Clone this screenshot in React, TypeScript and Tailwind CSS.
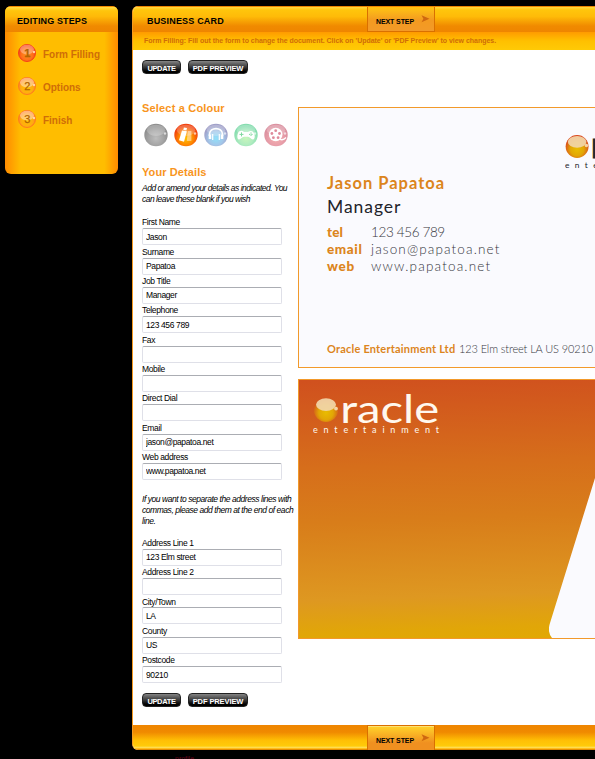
import type { ReactNode } from "react";

const detailFields: [string, string][] = [
  ["First Name", "Jason"],
  ["Surname", "Papatoa"],
  ["Job Title", "Manager"],
  ["Telephone", "123 456 789"],
  ["Fax", ""],
  ["Mobile", ""],
  ["Direct Dial", ""],
  ["Email", "jason@papatoa.net"],
  ["Web address", "www.papatoa.net"],
];

const addressFields: [string, string][] = [
  ["Address Line 1", "123 Elm street"],
  ["Address Line 2", ""],
  ["City/Town", "LA"],
  ["County", "US"],
  ["Postcode", "90210"],
];

function Field({ label, value }: { label: string; value: string }) {
  return (
    <label className="block h-[29.33px]">
      <span className="block h-[12.33px] whitespace-nowrap pt-[0.4px] text-[8.5px] leading-[13px] tracking-[-0.36px] text-black">{label}</span>
      <input
        defaultValue={value}
        className="block h-[17px] w-[140px] rounded-[2px] border border-[#dfe0e8] border-t-[#abadb3] bg-white px-[3px] text-[8.5px] tracking-[-0.38px] text-black outline-none"
      />
    </label>
  );
}

function Buttons() {
  return (
    <div className="flex h-[14px] gap-[7px] text-[7.5px] font-bold text-white">
      <button className="h-[14px] w-[39px] whitespace-nowrap rounded-[4px] border border-[#222] bg-linear-to-b from-[#858585] via-[#3a3a3a] via-50% to-black leading-[15px] tracking-[-0.35px]">
        UPDATE
      </button>
      <button className="h-[14px] w-[60px] whitespace-nowrap rounded-[4px] border border-[#222] bg-linear-to-b from-[#858585] via-[#3a3a3a] via-50% to-black leading-[15px] tracking-[-0.1px]">
        PDF PREVIEW
      </button>
    </div>
  );
}

function NextStep({ bottom = false }: { bottom?: boolean }) {
  return (
    <div
      className={
        bottom
          ? "ml-[234px] flex h-[25px] w-[68px] border-x border-t border-[#d97000] bg-linear-to-b from-[#ffd42a] to-[#f09020] to-70% pl-[8px] shadow-[inset_0_1px_0_#ffe070]"
          : "flex h-[25px] w-[68px] border-x border-b border-[#d97000] bg-linear-to-b from-[#ffc510] via-[#f39a20] via-55% to-[#f39a28] pl-[8px]"
      }
    >
      <span className="w-[45px] whitespace-nowrap pt-[9px] text-[7px] font-bold leading-[12px] tracking-[-0.1px]">
        NEXT STEP
      </span>
      <svg className="mt-[8px] h-[8px] w-[9px]" viewBox="0 0 9 8">
        <path d="M0.5 0.3 8.5 3.8 0.5 7.3 2.4 3.8Z" fill="#ce6810" />
      </svg>
    </div>
  );
}

function Step({ n, active = false, children }: { n: number; active?: boolean; children: ReactNode }) {
  const id = "step" + n;
  return (
    <li className="flex h-[33px] items-center">
      <svg className="mr-[6px] h-[20px] w-[20px]" viewBox="0 0 20 20">
        <defs>
          <radialGradient id={id} cx=".5" cy=".6" r=".58">
            <stop offset="0" stopColor={active ? "#ff9420" : "#ffc000"} />
            <stop offset=".6" stopColor={active ? "#ff6e18" : "#ffac10"} />
            <stop offset="1" stopColor={active ? "#f23018" : "#ff7428"} />
          </radialGradient>
        </defs>
        <circle cx="10" cy="10" r="8.5" fill={`url(#${id})`} stroke={active ? "#f5401a" : "#ff7a20"} strokeWidth="1" />
        <ellipse cx="10" cy="6.6" rx="7" ry="4.8" fill="#ffe0c8" opacity={active ? 0.42 : 0.55} />
        <circle cx="17" cy="9" r="1.2" fill="#ffe1c0" opacity=".85" />
        <text x="10.4" y="14" textAnchor="middle" fontSize="11" fontWeight={active ? 700 : 400} stroke="#ad6100" strokeWidth=".25" fill="#b56500">
          {n}
        </text>
      </svg>
      <span className="whitespace-nowrap pt-[4px] text-[10px] font-bold tracking-[-0.02px] text-[#cf6d08]">{children}</span>
    </li>
  );
}

function Orb({ kind }: { kind: string }) {
  const colors: Record<string, [string, string, string]> = {
    grey: ["#bdbdbd", "#a6a6a6", "#8e8e8e"],
    dance: ["#ffc000", "#ff8a00", "#f0400c"],
    music: ["#8fe0fa", "#a3c8ea", "#9f9fc8"],
    game: ["#c8f6bc", "#b0ecc0", "#84dcae"],
    film: ["#f4b0b0", "#eaa0aa", "#da909f"],
  };
  const [inner, middle, outer] = colors[kind];
  return (
    <svg className="h-[24px] w-[24px]" viewBox="0 0 24 24">
      <defs>
        <radialGradient id={kind} cx=".5" cy=".65" r=".6">
          <stop offset="0" stopColor={inner} />
          <stop offset=".5" stopColor={middle} />
          <stop offset=".9" stopColor={outer} />
        </radialGradient>
      </defs>
      <ellipse cx="12" cy="12" rx="11.7" ry="11.2" fill={`url(#${kind})`} />
      <ellipse cx="12" cy="7.3" rx="9.2" ry="5.6" fill="white" opacity=".24" />
      {kind === "dance" && (
        <g fill="white">
          <path d="m8 7.5 4.9.8-2.9 10.4L5 17.2Z" />
          <path d="m9.9 4.4 3.1.6-.6 2.6-3.1-.6Z" />
          <path d="M13.8 8h3.6v10h-4.6Z" opacity=".45" />
        </g>
      )}
      {kind === "music" && (
        <g fill="none" stroke="white" strokeWidth="1.7">
          <path d="M5.5 13V11C6 3.8 18 3.8 18.5 11v2" />
          <path d="M6 11.5v4.5M18 11.5v4.5" strokeWidth="2.6" />
          <path d="M8.7 11v6M15.3 11v6" strokeWidth="1.2" />
        </g>
      )}
      {kind === "game" && (
        <g>
          <path d="M5 8.5Q8 7 10 9h4q3-2 5-.2c2 2.2 2.5 7 .2 7.6-2 .4-3.3-2.6-5.2-2.6h-4c-2 0-3.4 3-5.3 2.6C2.5 15.7 3.3 10 5 8.5Z" fill="white" />
          <path d="M5.5 11.4h4M7.5 9.4v4" stroke="#80d99f" />
          <path d="M15 11.4h4M17 9.4v4" stroke="#80d99f" strokeDasharray="1.3 1" />
        </g>
      )}
      {kind === "film" && (
        <g>
          <circle cx="11.7" cy="11.5" r="6.8" fill="white" />
          <g fill="#df8b9b">
            <circle cx="11.7" cy="7.7" r="1.4" />
            <circle cx="7.9" cy="10.5" r="1.4" />
            <circle cx="15.5" cy="10.5" r="1.4" />
            <circle cx="9.4" cy="14.7" r="1.4" />
            <circle cx="14.1" cy="14.7" r="1.4" />
          </g>
          <path d="M15.5 16q3.5 2 6.5-1.5" fill="none" stroke="white" strokeWidth="1.4" />
        </g>
      )}
      <circle cx="21" cy="10.5" r="1.2" fill="white" opacity=".65" />
    </svg>
  );
}

function OracleLogo({ light = false }: { light?: boolean }) {
  const id = light ? "orangeLogo" : "darkLogo";
  const ink = light ? "#fff8ef" : "#25252d";
  return (
    <svg className={light ? "h-[44px] w-[130px] shrink-0" : "h-[41px] w-[121px] shrink-0"} viewBox="0 0 130 44">
      <defs>
        <radialGradient id={id} cx=".5" cy=".62" r=".58">
          <stop offset="0" stopColor="#e9bc00" />
          <stop offset=".5" stopColor="#e2a705" />
          <stop offset=".95" stopColor={light ? "#d2541c" : "#d9481d"} />
        </radialGradient>
      </defs>
      <ellipse cx="13" cy="16.6" rx="12.3" ry="12.3" fill={`url(#${id})`} />
      <ellipse cx="13" cy="11.6" rx="10" ry="6.3" fill="#f1d5a9" opacity=".93" />
      <circle cx="23" cy="15.6" r="1.9" fill="#f5d4a7" />
      <text x="27.2" y="29.5" fontFamily="Lato, sans-serif" fontSize="39" fontWeight="400" textLength="99" lengthAdjust="spacingAndGlyphs" stroke={ink} strokeWidth={light ? 0 : 1} fill={ink}>
        racle
      </text>
      <text x="0" y="39.8" fontFamily="Lato, sans-serif" fontSize="9" fontWeight="400" textLength="126" fill={ink}>
        entertainment
      </text>
    </svg>
  );
}

export default function App() {
  return (
    <div className="h-[759px] w-[595px] overflow-hidden bg-black font-['Liberation_Sans',Arial,sans-serif]">
      <div className="flex h-[750px] pl-[5px] pt-[6px]">
        <aside className="mr-[14px] h-[168px] w-[113px] shrink-0 overflow-hidden rounded-[6px] bg-[linear-gradient(90deg,#ff8b00,#ffbd00_14%,#ffbd00_88%,#ff8b00)]">
          <h2 className="h-[26px] border-t border-[#f58b00] bg-[linear-gradient(#ffdd48,#ffc50c_15%,#ffb908_38%,#f08a00_76%,#ef8500)] pl-[12px] text-[9px] font-bold leading-[28px] tracking-[0.12px]">
            EDITING STEPS
          </h2>
          <ol className="pl-[12px] pt-[4px]">
            <Step n={1} active>Form Filling</Step>
            <Step n={2}>Options</Step>
            <Step n={3}>Finish</Step>
          </ol>
        </aside>

        <main className="flex h-[744px] w-[700px] shrink-0 flex-col overflow-hidden rounded-l-[6px] border-l border-[#f59a20] bg-white">
          <header className="flex h-[26px] shrink-0 border-t border-[#ef8500] bg-[linear-gradient(#ffda42,#ffc50c_12%,#ffbb08_38%,#f08a00_76%,#ef8500)]">
            <h1 className="w-[234px] pl-[14px] text-[9px] font-bold leading-[28px] tracking-[0.18px]">BUSINESS CARD</h1>
            <NextStep />
          </header>
          <div className="h-[18px] shrink-0 whitespace-nowrap bg-linear-to-b from-[#ff9b00] via-[#ffc000] via-50% to-[#ffca06] pl-[11px] text-[7px] font-bold leading-[17px] tracking-[-0.025px] text-[#cf6d08]">
            Form Filling: Fill out the form to change the document. Click on 'Update' or 'PDF Preview' to view changes.
          </div>

          <div className="flex h-[675px] shrink-0">
            <form className="w-[165px] shrink-0 pl-[9px] pt-[10px]">
              <Buttons />
              <h2 className="mt-[27px] h-[14px] whitespace-nowrap text-[11px] font-bold leading-[14px] tracking-[0.18px] text-[#f8951d]">Select a Colour</h2>
              <div className="mt-[8px] flex h-[24px] gap-[6px] pl-[2px]">
                <Orb kind="grey" />
                <Orb kind="dance" />
                <Orb kind="music" />
                <Orb kind="game" />
                <Orb kind="film" />
              </div>
              <h2 className="mt-[18px] h-[14px] whitespace-nowrap text-[11px] font-bold leading-[14px] tracking-[0.1px] text-[#f8951d]">Your Details</h2>
              <p className="mt-[4px] h-[33px] whitespace-nowrap text-[8.5px] italic leading-[11px] tracking-[-0.49px]">
                Add or amend your details as indicated. You
                <br />
                can leave these blank if you wish
              </p>
              <div>
                {detailFields.map(([label, value]) => <Field key={label} label={label} value={value} />)}
              </div>
              <p className="mt-[14.5px] h-[42px] whitespace-nowrap text-[8.5px] italic leading-[11px] tracking-[-0.45px]">
                If you want to separate the address lines with
                <br />
                commas, please add them at the end of each
                <br />
                line.
              </p>
              <div>
                {addressFields.map(([label, value]) => <Field key={label} label={label} value={value} />)}
              </div>
              <div className="mt-[10px]"><Buttons /></div>
            </form>

            <section className="w-[530px] shrink-0 pt-[57px]">
              <article className="h-[261px] border border-[#f29a2b] bg-[#fafafe] font-[Lato,sans-serif]">
                <div className="flex h-[66px] pl-[266px] pt-[23px]"><OracleLogo /></div>
                <div className="whitespace-nowrap pl-[28px]">
                  <h3 className="h-[20px] text-[16.5px] font-bold leading-[19px] tracking-[1px] text-[#dc851c]">Jason Papatoa</h3>
                  <p className="mt-[2px] h-[22px] text-[17.5px] leading-[22px] tracking-[0.95px] text-[#22232a]">Manager</p>
                  <dl className="mt-[6px] grid grid-cols-[44px_1fr] text-[13.5px] leading-[17px] text-[#35363d]">
                    <dt className="font-black tracking-[0.1px] text-[#dc851c]">tel</dt><dd className="font-light tracking-[-0.36px]">123 456 789</dd>
                    <dt className="font-black tracking-[0.6px] text-[#dc851c]">email</dt><dd className="font-light tracking-[1.13px]">jason@papatoa.net</dd>
                    <dt className="font-black tracking-[0.7px] text-[#dc851c]">web</dt><dd className="font-light tracking-[1.18px]">www.papatoa.net</dd>
                  </dl>
                  <p className="mt-[66px] flex h-[16px] text-[11px] leading-[16px] text-[#35363d]">
                    <strong className="w-[132px] tracking-[0.2px] text-[#dc851c]">Oracle Entertainment Ltd</strong>
                    <span className="font-light tracking-[-0.12px]">123 Elm street LA US 90210</span>
                  </p>
                </div>
              </article>
              <article className="mt-[11px] flex h-[260px] border border-[#f2992b] bg-[linear-gradient(178deg,#d0501e,#d66e1b_32%,#d87d1a_52%,#de9821_80%,#e1a608_92%,#e2aa00)]">
                <div className="w-[250px] shrink-0 pl-[14px] pt-[13px]"><OracleLogo light /></div>
                <svg className="h-[258px] w-[278px] shrink-0" viewBox="0 0 278 258">
                  <path d="M46 98 1 243Q-2 252 3 258H278V0H76Z" fill="#fafafe" />
                </svg>
              </article>
            </section>
          </div>

          <footer className="h-[25px] shrink-0 border-b border-[#e58b00] bg-[linear-gradient(#ef8500,#f08a00_30%,#ffc005_65%,#ffcb0a_88%,#ffe25a_93%,#ffac00)]">
            <NextStep bottom />
          </footer>
        </main>
      </div>
      <div className="h-[9px] overflow-hidden whitespace-nowrap pl-[175px] pt-[5px] text-[7px] leading-[8px] text-[#650018]">
        profile
      </div>
    </div>
  );
}
